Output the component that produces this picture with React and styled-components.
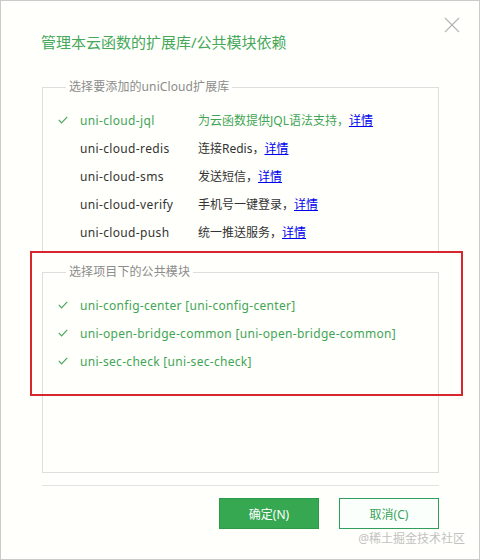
import styled, { createGlobalStyle } from "styled-components"

const GlobalStyle = createGlobalStyle`
    html, body {
        margin: 0;
        padding: 0;
        background: #fffffb;
    }
    * {
        box-sizing: border-box;
    }
`

const extensions = [
    { name: "uni-cloud-jql", desc: "为云函数提供JQL语法支持，", checked: true },
    { name: "uni-cloud-redis", desc: "连接Redis，", checked: false },
    { name: "uni-cloud-sms", desc: "发送短信，", checked: false },
    { name: "uni-cloud-verify", desc: "手机号一键登录，", checked: false },
    { name: "uni-cloud-push", desc: "统一推送服务，", checked: false },
]

const modules = [
    "uni-config-center [uni-config-center]",
    "uni-open-bridge-common [uni-open-bridge-common]",
    "uni-sec-check [uni-sec-check]",
]

function Check() {
    return (
        <svg width="10" height="8" viewBox="0 0 10 8">
            <polyline points="0.8,3.8 3.6,6.8 9.2,0.8" fill="none" stroke="#4aa860" strokeWidth="1.2" />
        </svg>
    )
}

function CloseIcon() {
    return (
        <svg width="16" height="16" viewBox="0 0 16 16">
            <path d="M1 1 L15 15 M15 1 L1 15" stroke="#b4b4b4" strokeWidth="1.1" fill="none" />
        </svg>
    )
}

export default function App() {
    return (
        <>
            <GlobalStyle />
            <Window>
                <Header>
                    <Title>管理本云函数的扩展库/公共模块依赖</Title>
                    <CloseButton><CloseIcon /></CloseButton>
                </Header>
                <Body>
                    <Group>
                        <Legend>选择要添加的uniCloud扩展库</Legend>
                        {extensions.map((ext) => (
                            <Row key={ext.name} $active={ext.checked}>
                                <CheckCell>{ext.checked && <Check />}</CheckCell>
                                <Name>{ext.name}</Name>
                                <span>{ext.desc}<Link href="#">详情</Link></span>
                            </Row>
                        ))}
                    </Group>
                    <Group $grow>
                        <Legend>选择项目下的公共模块</Legend>
                        {modules.map((m) => (
                            <Row key={m} $active>
                                <CheckCell><Check /></CheckCell>
                                <ModuleName>{m}</ModuleName>
                            </Row>
                        ))}
                    </Group>
                    <Footer>
                        <Button $primary>确定(N)</Button>
                        <Button>取消(C)</Button>
                    </Footer>
                </Body>
                <Highlight />
                <Watermark>@稀土掘金技术社区</Watermark>
            </Window>
        </>
    )
}

const Window = styled.div`
    position: relative;
    width: 480px;
    height: 560px;
    border: 1px solid #cbcbcb;
    background: #fffffb;
    display: flex;
    flex-direction: column;
    font-family: "Noto Sans", "Noto Sans CJK SC", sans-serif;
    font-size: 12px;
    color: #333;
`

const Header = styled.div`
    display: flex;
    align-items: flex-start;
    justify-content: space-between;
    padding: 16px 19px 0 40px;
`

const Title = styled.h1`
    margin: 15px 0 0 0;
    font-size: 15px;
    line-height: 20px;
    font-weight: normal;
    color: #45a85a;
`

const CloseButton = styled.div`
    width: 16px;
    height: 16px;
    display: flex;
`

const Body = styled.div`
    flex: 1;
    display: flex;
    flex-direction: column;
    padding: 0 40px 0 41px;
    margin-top: 27px;
`

const Group = styled.fieldset`
    margin: 0;
    padding: 11px 0 6px 15px;
    border: 1px solid #dedede;
    min-width: 0;
    ${(p) => p.$grow && `flex: 1; margin-top: 11px;`}
`

const Legend = styled.legend`
    margin-left: 8px;
    padding: 0 3px;
    font-size: 12px;
    line-height: 16px;
    color: #8c8c8c;
    letter-spacing: 0.1px;
`

const Row = styled.div`
    display: flex;
    align-items: center;
    height: 28px;
    color: ${(p) => (p.$active ? "#3fa556" : "#333")};
    white-space: nowrap;
`

const CheckCell = styled.span`
    width: 22px;
    display: flex;
    align-items: center;
`

const Name = styled.span`
    width: 118px;
    letter-spacing: 0.35px;
`

const ModuleName = styled.span`
    letter-spacing: 0.3px;
`

const Link = styled.a`
    color: #0000ee;
    text-decoration: underline;
`

const Footer = styled.div`
    display: flex;
    justify-content: flex-end;
    gap: 20px;
    margin-top: 12px;
    border-top: 1px solid #e2e2e2;
    padding: 12px 0 30px 0;
`

const Button = styled.button`
    width: 100px;
    height: 31px;
    font-family: inherit;
    font-size: 12px;
    cursor: pointer;
    border: 1px solid ${(p) => (p.$primary ? "#2b9b48" : "#2e9e5c")};
    background: ${(p) => (p.$primary ? "#36a852" : "#fbfffc")};
    color: ${(p) => (p.$primary ? "#ffffff" : "#3aa35a")};
`

const Highlight = styled.div`
    position: absolute;
    left: 29px;
    top: 250px;
    width: 433px;
    height: 145px;
    border: 2px solid #d7262c;
    pointer-events: none;
`

const Watermark = styled.div`
    position: absolute;
    right: 14px;
    bottom: 12px;
    font-size: 12px;
    color: #c2c2c2;
`
